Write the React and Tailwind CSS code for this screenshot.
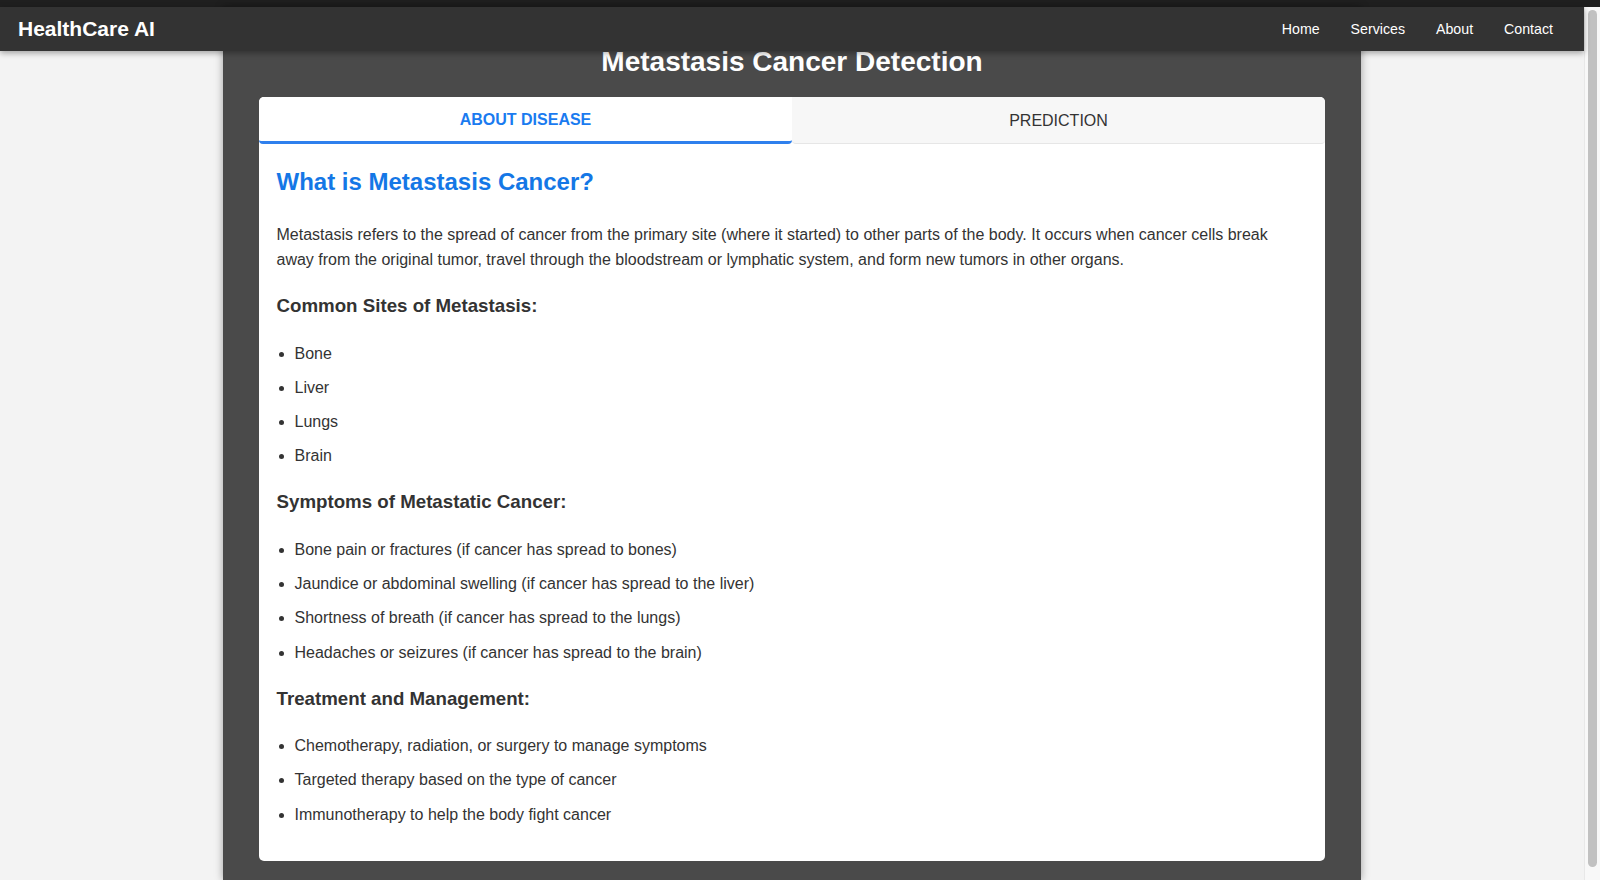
import { useState } from "react";

const sites = ["Bone", "Liver", "Lungs", "Brain"];

const symptoms = [
  "Bone pain or fractures (if cancer has spread to bones)",
  "Jaundice or abdominal swelling (if cancer has spread to the liver)",
  "Shortness of breath (if cancer has spread to the lungs)",
  "Headaches or seizures (if cancer has spread to the brain)",
];

const treatments = [
  "Chemotherapy, radiation, or surgery to manage symptoms",
  "Targeted therapy based on the type of cancer",
  "Immunotherapy to help the body fight cancer",
];

function BulletList({ items }) {
  return (
    <ul className="list-disc pl-[18px] mt-[19.5px]">
      {items.map((item) => (
        <li key={item} className="text-[16px] leading-[25.6px] py-[4.3px] text-[#333]">
          {item}
        </li>
      ))}
    </ul>
  );
}

export default function App() {
  const [tab, setTab] = useState("about");

  return (
    <div
      className="h-screen overflow-hidden bg-[#f3f3f3] flex flex-col"
      style={{ fontFamily: '"Liberation Sans", Arial, sans-serif' }}
    >
      {/* browser strip */}
      <div className="h-[7px] bg-[#1f1f1f] shrink-0" />

      <div className="flex flex-1 min-h-0">
        {/* PAGE */}
        <div className="relative flex-1 min-w-0">
          {/* NAVBAR */}
          <nav className="absolute top-0 left-0 right-0 z-10 h-[44px] bg-[#333] flex items-center justify-between pl-[18px] pr-[31px] shadow-[0_2px_6px_rgba(0,0,0,0.35)]">
            <div className="text-white font-bold text-[21px]">HealthCare AI</div>
            <div className="flex gap-[31px] pt-[2px] text-white text-[14.2px]">
              <a href="#">Home</a>
              <a href="#">Services</a>
              <a href="#">About</a>
              <a href="#">Contact</a>
            </div>
          </nav>

          {/* MAIN CONTAINER */}
          <div className="w-[1138px] mx-auto h-full bg-[#4a4a4a] px-[36px] pt-[39px] shadow-[0_0_8px_rgba(0,0,0,0.35)]">
            <h1 className="text-white font-bold text-[28px] leading-[32px] text-center">
              Metastasis Cancer Detection
            </h1>

            <div className="mt-[19px] bg-white rounded-[5px] overflow-hidden">
              {/* TABS */}
              <div className="flex h-[47px]">
                <button
                  onClick={() => setTab("about")}
                  className={`flex-1 text-[16px] pt-[1px] rounded-b-[4px] ${
                    tab === "about"
                      ? "bg-white text-[#1a7bf0] font-bold border-b-[3px] border-[#2f80ed]"
                      : "bg-[#f7f7f7] text-[#333] border-b border-[#e6e6e6]"
                  }`}
                >
                  ABOUT DISEASE
                </button>
                <button
                  onClick={() => setTab("prediction")}
                  className={`flex-1 text-[16px] pt-[1px] rounded-b-[4px] ${
                    tab === "prediction"
                      ? "bg-white text-[#1a7bf0] font-bold border-b-[3px] border-[#2f80ed]"
                      : "bg-[#f7f7f7] text-[#333] border-b border-[#e6e6e6]"
                  }`}
                >
                  PREDICTION
                </button>
              </div>

              {/* CONTENT */}
              <div className="px-[17.5px] pt-[24px] pb-[29.5px] text-[#333]">
                <h2 className="text-[24px] leading-[28px] font-bold text-[#1477e6]">
                  What is Metastasis Cancer?
                </h2>
                <p className="mt-[25.5px] text-[16px] leading-[25px]">
                  Metastasis refers to the spread of cancer from the primary site (where it started) to other parts of the body. It occurs when cancer cells break away from the original tumor, travel through the bloodstream or lymphatic system, and form new tumors in other organs.
                </p>

                <h3 className="mt-[23.5px] text-[18.72px] leading-[22px] font-bold">
                  Common Sites of Metastasis:
                </h3>
                <BulletList items={sites} />

                <h3 className="mt-[18px] text-[18.72px] leading-[22px] font-bold">
                  Symptoms of Metastatic Cancer:
                </h3>
                <BulletList items={symptoms} />

                <h3 className="mt-[18px] text-[18.72px] leading-[22px] font-bold">
                  Treatment and Management:
                </h3>
                <BulletList items={treatments} />
              </div>
            </div>
          </div>
        </div>

        {/* SCROLLBAR */}
        <div className="w-[16px] shrink-0 bg-[#f8f8f8] border-l border-[#e8e8e8] pt-[3px] pb-[13px] px-[3px]">
          <div className="h-full rounded-full bg-[#c1c1c1]" />
        </div>
      </div>
    </div>
  );
}
